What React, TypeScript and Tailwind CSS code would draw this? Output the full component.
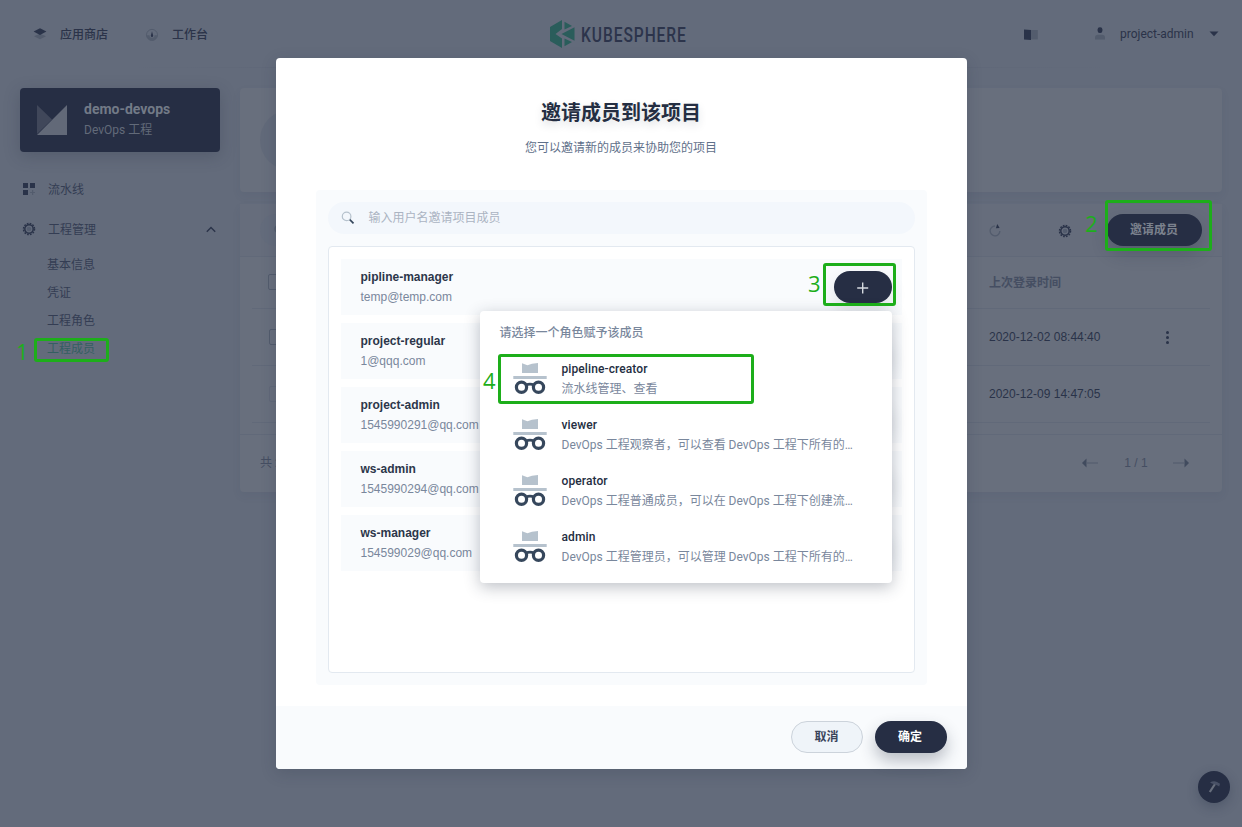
import React from "react";

const members = [
  { name: "pipline-manager", email: "temp@temp.com" },
  { name: "project-regular", email: "1@qqq.com" },
  { name: "project-admin", email: "1545990291@qq.com" },
  { name: "ws-admin", email: "1545990294@qq.com" },
  { name: "ws-manager", email: "154599029@qq.com" },
];

const roles = [
  { name: "pipeline-creator", desc: "流水线管理、查看" },
  { name: "viewer", desc: "DevOps 工程观察者，可以查看 DevOps 工程下所有的…" },
  { name: "operator", desc: "DevOps 工程普通成员，可以在 DevOps 工程下创建流…" },
  { name: "admin", desc: "DevOps 工程管理员，可以管理 DevOps 工程下所有的…" },
];

const subItems = ["基本信息", "凭证", "工程角色", "工程成员"];

function GearIcon() {
  return (
    <svg className="size-4 shrink-0" viewBox="0 0 16 16" fill="none">
      <circle cx="8" cy="8" r="5.5" stroke="#2a3349" strokeWidth="1.5" strokeDasharray="1.7 1.18" />
      <circle cx="8" cy="8" r="4.2" stroke="#2a3349" strokeWidth="1.5" />
      <circle cx="8" cy="8" r="2.3" fill="#535c6e" />
    </svg>
  );
}

function RoleIcon() {
  return (
    <svg className="size-10 shrink-0" viewBox="0 0 40 40" fill="none">
      <path d="M12 4.2 L17.4 6.2 L22 4.7 L28 4 V14 H12 Z" fill="#b6c2cd" />
      <path d="M3.3 17h33.4v3H3.3z" fill="#b6c2cd" />
      <circle cx="11.5" cy="28.3" r="5.1" stroke="#36475c" strokeWidth="3.2" />
      <circle cx="28.5" cy="28.3" r="5.1" stroke="#36475c" strokeWidth="3.2" />
      <path d="M15.8 26.2Q20 24.2 24.2 26.2" stroke="#36475c" strokeWidth="2.8" />
    </svg>
  );
}

function Header() {
  return (
    <header className="relative flex h-[68px] items-center text-xs text-[#2b3349]">
      <div className="flex w-[112px] items-center pl-8">
        <svg className="mr-[12px] size-4 shrink-0" viewBox="0 0 16 16">
          <path d="M2 10.2 8 7.8l6 2.4-6 3.1z" fill="#535c6d" />
          <path d="M1.6 5.4 8 2.2l6.4 3.2L8 9z" fill="#2a3349" />
        </svg>
        <span className="whitespace-nowrap pt-[2px] font-medium">应用商店</span>
      </div>
      <div className="flex items-center pl-8">
        <svg className="mr-[12px] size-4 shrink-0" viewBox="0 0 16 16" fill="none">
          <circle cx="8" cy="8.9" r="5.5" stroke="#535c6d" />
          <path d="M2.5 9.2h3a2.5 2.5 0 0 0 5 0h3a5.5 5.5 0 0 1-11 0z" fill="#535c6d" />
          <path d="M8 5.2 9.2 9.7a1.2 1.2 0 0 1-2.4 0z" fill="#2a3349" />
        </svg>
        <span className="pt-[2px] font-medium">工作台</span>
      </div>
      <svg className="absolute left-[549px] top-[19px] overflow-visible" width="138" height="32" viewBox="0 0 138 32">
        <g fill="#2a5d5b">
          <path d="M1 8 13 1v9L6.5 15 13 19.5V29L1 22z" />
          <path d="M15.5 2.7 23 7l-7.5 3.5z" />
          <path d="M25.5 8.2v13.6L12.5 15z" />
          <path d="M15.5 19.5 23 23l-7.5 4.3z" />
        </g>
        <g transform="translate(32 22.6) scale(0.76 1)">
          <text fontFamily="Roboto, sans-serif" fontSize="20.5" fontWeight="500" fill="#2c344b" textLength="138">KUBESPHERE</text>
        </g>
      </svg>
      <div className="ml-auto flex items-center pr-[23px]">
        <svg className="mr-[53px] size-4" viewBox="0 0 16 16">
          <path d="M1 3.4 8 4v10l-7-.6z" fill="#2a3349" />
          <path d="M8 4h6.8v9.4H8z" fill="#535c6d" />
        </svg>
        <svg className="mr-[12px] size-4" viewBox="0 0 16 16">
          <path d="M3 13.5V11q0-2 2.5-2.3h5Q13 9 13 11v2.5z" fill="#535c6d" />
          <rect x="5.6" y="1.2" width="4.8" height="5.8" rx="2.2" fill="#2a3349" />
        </svg>
        <span className="w-[74px]">project-admin</span>
        <svg className="ml-[15px]" width="10" height="6" viewBox="0 0 10 6"><path d="M.5.5h9L5 5.3z" fill="#2a3349" /></svg>
      </div>
      <div className="absolute bottom-0 left-[120px] h-px w-[1000px] bg-linear-to-r from-transparent via-[#596173] to-transparent" />
    </header>
  );
}

function Sidebar() {
  return (
    <aside className="w-[200px] shrink-0 text-xs text-[#343d53]">
      <div className="flex h-16 items-center rounded bg-[#262e44] pl-[17px] shadow-[0_4px_16px_rgba(38,46,68,0.25)]">
        <svg width="30" height="30" viewBox="0 0 30 30">
          <path d="M0 0v29L15 14.5z" fill="#40475a" />
          <path d="M30 0v30H0z" fill="#626978" />
        </svg>
        <div className="-mt-px ml-[17px]">
          <div className="text-sm font-bold leading-5 text-[#727a87]">demo-devops</div>
          <div className="pt-px leading-5 text-[#626a79]">DevOps 工程</div>
        </div>
      </div>
      <nav className="mt-[17px]">
        <div className="flex h-10 items-center">
          <svg className="size-[18px]" viewBox="0 0 18 18">
            <path d="M3 3h5v5H3zM10 3h5v5h-5zM3 10h5v5H3z" fill="#2a3349" />
            <path d="M12 10h1.2v1.9H15v1.2h-1.8V15H12v-1.9h-1.9v-1.2H12z" fill="#535c6d" />
          </svg>
          <span className="ml-[10px] pt-[2px]">流水线</span>
        </div>
        <div className="flex h-10 items-center pl-px pr-1">
          <GearIcon />
          <span className="ml-[11px] pt-[2px]">工程管理</span>
          <svg className="ml-auto" width="10" height="7" viewBox="0 0 10 7" fill="none"><path d="M.8 5.8 5 1.6l4.2 4.2" stroke="#2a3349" strokeWidth="1.4" /></svg>
        </div>
        <ul className="mt-[2px] pl-[27px]">
          {subItems.map((t, i) => (
            <li key={t} className={i === 3 ? "h-7 leading-7 text-[#345f61]" : "h-7 leading-7"}>{t}</li>
          ))}
        </ul>
      </nav>
    </aside>
  );
}

function Row({ date, more }: { date: string; more?: boolean }) {
  return (
    <div className="mx-3 flex h-[57px] items-center border-b border-[#616979] pl-[17px] font-['Liberation_Sans',sans-serif] text-[#2a3349]">
      <span className={more ? "size-4 rounded-xs border border-[#535c6d]" : "size-4 rounded-xs border border-[#616979]"} />
      <span className="ml-auto w-[112px] whitespace-nowrap">{date}</span>
      <span className="ml-[59px] flex w-[50px] flex-col items-start gap-[2px] pl-[6px] pt-px">
        {more && [0, 1, 2].map((k) => <i key={k} className="size-[3px] rounded-full bg-[#2a3349]" />)}
      </span>
    </div>
  );
}

function Content() {
  return (
    <main className="flex flex-1 flex-col gap-3 text-xs">
      <section className="flex h-[104px] items-center rounded bg-[#686f7d] pl-5 shadow-[0_4px_8px_rgba(54,67,92,0.08)]">
        <div className="size-[60px] rounded-full bg-[#626a7a]" />
      </section>
      <section className="h-[288px] rounded bg-[#686f7d] shadow-[0_4px_8px_rgba(54,67,92,0.08)]">
        <div className="flex h-[53px] items-center border-b border-[#616979] bg-[#666d7c] pl-5 pr-5">
          <div className="flex h-8 w-[400px] items-center rounded-full bg-[#646c7c] pl-3">
            <svg className="size-4" viewBox="0 0 16 16" fill="none"><circle cx="7" cy="7" r="4" stroke="#535c6d" strokeWidth="1.5" /></svg>
          </div>
          <svg className="ml-auto size-4" viewBox="0 0 16 16" fill="none">
            <path d="M8 4A4.9 4.9 0 1 0 12.9 9" stroke="#535c6d" strokeWidth="1.3" />
            <path d="M10.3 2 12.6 6 8.9 6.2z" fill="#2a3349" />
          </svg>
          <div className="ml-[54px] mr-[34px] pt-px"><GearIcon /></div>
          <button className="h-8 w-[95px] rounded-full bg-[#262e44] pr-px font-bold text-[#7c828e] shadow-[0_8px_16px_rgba(38,46,68,0.25)]">邀请成员</button>
        </div>
        <div className="mx-3 flex h-[52px] items-center border-b border-[#616979] pl-4 font-bold text-[#454e62]">
          <span className="mb-px size-4 rounded-xs border border-[#535c6d]" />
          <span className="ml-auto w-[221px]">上次登录时间</span>
        </div>
        <Row date="2020-12-02 08:44:40" more />
        <Row date="2020-12-09 14:47:05" />
        <div className="mt-[11px] flex h-[58px] items-center border-t border-[#616979] pb-[2px] pl-5 pr-8 text-[#454e62]">
          <span className="pt-px">共 2 个条目</span>
          <svg className="ml-auto" width="18" height="10" viewBox="0 0 18 10"><path d="M0 5l4.5-4.5v9z" fill="#414b5e" /><path d="M4 4.4h12v1.2H4z" fill="#555e6f" /></svg>
          <span className="w-[72px] text-center font-['Liberation_Sans',sans-serif]">1 / 1</span>
          <svg width="18" height="10" viewBox="0 0 18 10"><path d="M17 5l-4.5-4.5v9z" fill="#414b5e" /><path d="M1 4.4h12v1.2H1z" fill="#555e6f" /></svg>
        </div>
      </section>
    </main>
  );
}

function RolePopover() {
  return (
    <div className="absolute left-[204px] top-[253px] h-[272px] w-[412px] rounded bg-white shadow-[0_4px_16px_rgba(36,46,66,0.3)]">
      <div className="h-10 pl-5 pt-3 font-medium leading-5 text-[#79879c]">请选择一个角色赋予该成员</div>
      {roles.map((r) => (
        <div key={r.name} className="flex h-14 items-center pl-[30px]">
          <RoleIcon />
          <div className="ml-3 whitespace-nowrap">
            <div className="font-medium leading-5 tracking-[0.1px] text-[#242e42]">{r.name}</div>
            <div className="leading-5 text-[#79879c]">{r.desc}</div>
          </div>
        </div>
      ))}
    </div>
  );
}

function InviteModal() {
  return (
    <div className="relative flex h-[711px] w-[691px] flex-col rounded bg-white text-xs shadow-[0_4px_16px_rgba(36,46,66,0.2)]">
      <div className="flex flex-1 flex-col items-center pt-[39px]">
        <h1 className="text-xl font-bold leading-8 text-[#242e42] [text-shadow:0_4px_8px_rgba(36,46,66,0.15)]">邀请成员到该项目</h1>
        <p className="mt-[9px] leading-5 text-[#5f708a]">您可以邀请新的成员来协助您的项目</p>
        <div className="mt-8 flex h-[495px] w-[611px] flex-col gap-3 rounded bg-[#f9fbfd] p-3">
          <div className="flex h-8 shrink-0 items-center rounded-full bg-[#f3f7fc] pl-3 text-[#abb4c2]">
            <svg className="mr-[13px] size-4" viewBox="0 0 16 16" fill="none">
              <circle cx="6.6" cy="6.4" r="4.3" stroke="#b6c2cd" strokeWidth="1.2" />
              <path d="m9.8 9.6 3.7 3.7" stroke="#36475c" strokeWidth="1.7" />
            </svg>
            输入用户名邀请项目成员
          </div>
          <div className="flex flex-1 flex-col gap-2 rounded border border-[#e3e9f0] bg-white p-3">
            {members.map((m) => (
              <div key={m.name} className="flex h-14 items-center bg-[#f9fbfd] pl-5 pr-[10px] font-['Liberation_Sans',sans-serif]">
                <div>
                  <div className="font-bold leading-5 text-[#2c364a]">{m.name}</div>
                  <div className="leading-5 text-[#79879c]">{m.email}</div>
                </div>
                <button className="ml-auto flex h-8 w-[58px] items-center justify-center rounded-full bg-[#262e44] shadow-[0_8px_16px_rgba(36,46,66,0.12)]">
                  <svg className="mt-[2px]" width="12" height="12" viewBox="0 0 12 12"><path d="M5 .5h1.4v11H5zM.2 5.3h11v1.4H.2z" fill="#d5d9df" /></svg>
                </button>
              </div>
            ))}
          </div>
        </div>
      </div>
      <footer className="flex h-[63px] items-center justify-end gap-3 rounded-b bg-[#f9fbfd] pb-px pr-5 font-bold">
        <button className="h-8 w-[72px] rounded-full border border-[#ccd3db] bg-[#eff4f9] text-[#3b455b]">取消</button>
        <button className="h-8 w-[72px] rounded-full bg-[#262e44] pr-px text-white shadow-[0_8px_16px_rgba(36,46,66,0.3)]">确定</button>
      </footer>
      <RolePopover />
    </div>
  );
}

function Callouts() {
  const box = "absolute rounded-[3px] border-3 border-[#1dae1a]";
  const digit = "absolute font-['Open_Sans',sans-serif] text-[22px] leading-6 text-[#1dae1a]";
  return (
    <div className="pointer-events-none absolute inset-0">
      <div className={box + " left-[34px] top-[338px] h-[24px] w-[75px]"} />
      <span className={digit + " left-[16px] top-[339px]"}>1</span>
      <div className={box + " left-[1105px] top-[200px] h-[51px] w-[107px]"} />
      <span className={digit + " left-[1085px] top-[211px]"}>2</span>
      <div className={box + " left-[823px] top-[263px] h-[43px] w-[73px]"} />
      <span className={digit + " left-[808px] top-[271px]"}>3</span>
      <div className={box + " left-[498px] top-[354px] h-[50px] w-[256px]"} />
      <span className={digit + " left-[483px] top-[368px]"}>4</span>
    </div>
  );
}

export default function App() {
  return (
    <div className="relative h-[827px] w-[1242px] overflow-hidden bg-[#636b7b] font-['Roboto','Noto_Sans_CJK_SC',sans-serif]">
      <Header />
      <div className="flex gap-5 px-5 pt-5">
        <Sidebar />
        <Content />
      </div>
      <button className="absolute bottom-6 right-3 flex size-8 items-center justify-center rounded-full bg-[#262e44] shadow-[0_4px_12px_rgba(38,46,68,0.3)]">
        <svg className="size-4" viewBox="0 0 16 16" fill="none">
          <path d="M9 5 3.8 13" stroke="#686f7d" strokeWidth="2.2" />
          <path d="M4.2 3.2Q8 1.2 11 3l3 1.8-.8 2.6L11 6.3 4.8 4.1z" fill="#495166" />
        </svg>
      </button>
      <div className="absolute inset-0 flex items-start justify-center pt-[58px]">
        <InviteModal />
      </div>
      <Callouts />
    </div>
  );
}
